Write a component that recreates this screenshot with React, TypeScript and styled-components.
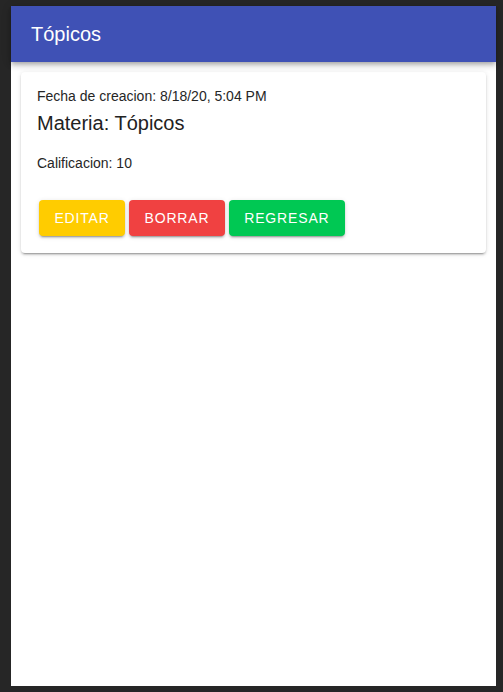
import React from "react";
import styled, { createGlobalStyle } from "styled-components";

const Global = createGlobalStyle`
  html, body { margin: 0; padding: 0; background: #262626; }
  body { font-family: "Liberation Sans", Arial, sans-serif; }
  * { box-sizing: border-box; }
`;

const Frame = styled.div`
  height: 692px;
  padding: 6px 7px 6px 11px;
  background: #262626;
`;

const Page = styled.div`
  height: 100%;
  background: #ffffff;
  display: flex;
  flex-direction: column;
`;

const Header = styled.header`
  height: 56px;
  background: #3f51b5;
  display: flex;
  align-items: center;
  padding-left: 20px;
  box-shadow: 0 2px 4px -1px rgba(0,0,0,0.2), 0 4px 5px 0 rgba(0,0,0,0.14), 0 1px 10px 0 rgba(0,0,0,0.12);
  position: relative;
  z-index: 1;
`;

const Title = styled.h1`
  margin: 0;
  color: #ffffff;
  font-size: 20px;
  font-weight: 400;
`;

const Card = styled.section`
  margin: 10px;
  background: #ffffff;
  border-radius: 4px;
  box-shadow: 0 3px 1px -2px rgba(0,0,0,0.2), 0 2px 2px 0 rgba(0,0,0,0.14), 0 1px 5px 0 rgba(0,0,0,0.12);
  padding: 16px 16px 17px 16px;
  color: rgba(0,0,0,0.87);
`;

const Subtitle = styled.div`
  font-size: 14px;
  line-height: 17px;
  color: #262626;
`;

const CardTitle = styled.div`
  font-size: 20px;
  line-height: 24px;
  margin-top: 6px;
  color: #222222;
`;

const Body = styled.div`
  font-size: 14px;
  line-height: 17px;
  margin-top: 20px;
  color: #262626;
`;

const Actions = styled.div`
  display: flex;
  gap: 4px;
  margin-top: 28px;
  padding-left: 2px;
`;

const Button = styled.button<{ $bg: string }>`
  height: 36px;
  border: none;
  border-radius: 4px;
  padding: 0 15.4px;
  background: ${(p) => p.$bg};
  color: #ffffff;
  font-family: "Liberation Sans", Arial, sans-serif;
  font-size: 14px;
  letter-spacing: 0.06em;
  text-transform: uppercase;
  box-shadow: 0 3px 1px -2px rgba(0,0,0,0.2), 0 2px 2px 0 rgba(0,0,0,0.14), 0 1px 5px 0 rgba(0,0,0,0.12);
`;

export default function App() {
  return (
    <>
      <Global />
      <Frame>
        <Page>
          <Header>
            <Title>Tópicos</Title>
          </Header>
          <Card>
            <Subtitle>Fecha de creacion: 8/18/20, 5:04 PM</Subtitle>
            <CardTitle>Materia: Tópicos</CardTitle>
            <Body>Calificacion: 10</Body>
            <Actions>
              <Button $bg="#ffcc00">Editar</Button>
              <Button $bg="#f04141">Borrar</Button>
              <Button $bg="#00c853">Regresar</Button>
            </Actions>
          </Card>
        </Page>
      </Frame>
    </>
  );
}
